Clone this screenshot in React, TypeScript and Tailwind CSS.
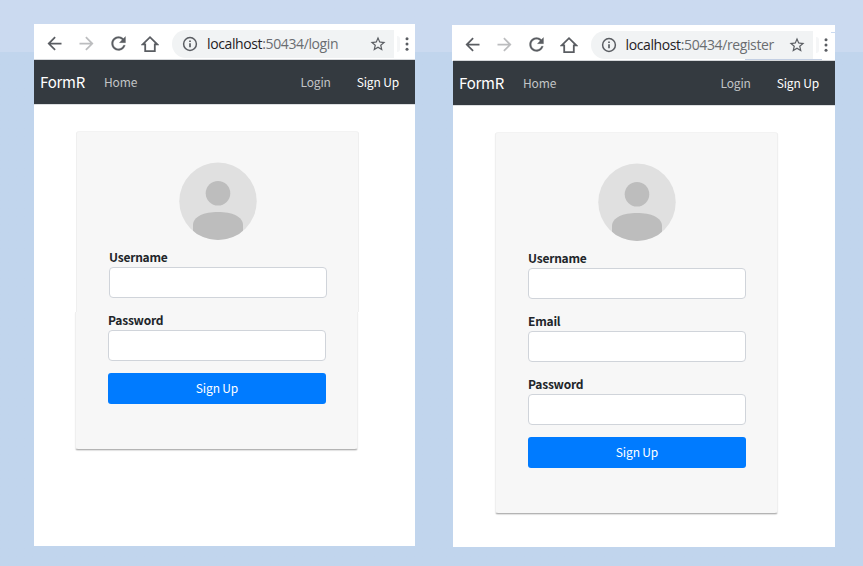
import React from "react";

const sans = "font-['Noto_Sans_CJK_SC','Noto_Sans',sans-serif]";

function ArrowBack({ className = "" }: { className?: string }) {
  return (
    <svg viewBox="0 0 24 24" className={`size-[21px] shrink-0 ${className}`} fill="currentColor">
      <path d="M20 11H7.83l5.59-5.59L12 4l-8 8 8 8 1.41-1.41L7.83 13H20v-2z" />
    </svg>
  );
}

function Reload() {
  return (
    <svg viewBox="0 0 24 24" className="size-[21px] shrink-0" fill="currentColor" stroke="currentColor" strokeWidth="0.3">
      <path d="M17.65 6.35C16.2 4.9 14.21 4 12 4c-4.42 0-7.99 3.58-7.99 8s3.57 8 7.99 8c3.73 0 6.84-2.55 7.73-6h-2.08c-.82 2.33-3.04 4-5.65 4-3.31 0-6-2.69-6-6s2.69-6 6-6c1.66 0 3.14.69 4.22 1.78L13 11h7V4l-2.35 2.35z" />
    </svg>
  );
}

function HomeIcon() {
  return (
    <svg viewBox="0 0 18 18" className="size-[18px] shrink-0" fill="none" stroke="currentColor" strokeWidth="1.8">
      <path d="M1.7 9.4 9 2.2l7.3 7.2h-2.5v6.7H4.2V9.4Z" />
    </svg>
  );
}

function InfoIcon() {
  return (
    <svg viewBox="0 0 16 16" className="size-4 shrink-0" fill="none" stroke="currentColor">
      <circle cx="8" cy="8" r="6.4" strokeWidth="1.5" />
      <path d="M8 7.2v4M8 4.4v1.6" strokeWidth="1.7" />
    </svg>
  );
}

function StarIcon() {
  return (
    <svg viewBox="0 0 24 24" className="size-[18px] shrink-0" fill="currentColor">
      <path d="M22 9.24l-7.19-.62L12 2 9.19 8.63 2 9.24l5.46 4.73L5.82 21 12 17.27 18.18 21l-1.63-7.03L22 9.24zM12 15.4l-3.76 2.27 1-4.28-3.32-2.88 4.38-.38L12 6.1l1.71 4.04 4.38.38-3.32 2.88 1 4.28L12 15.4z" />
    </svg>
  );
}

function Dots() {
  return (
    <svg viewBox="0 0 4 14" className="h-[14px] w-1 shrink-0" fill="currentColor">
      <circle cx="2" cy="1.8" r="1.5" />
      <circle cx="2" cy="7" r="1.5" />
      <circle cx="2" cy="12.2" r="1.5" />
    </svg>
  );
}

function Toolbar({ path }: { path: string }) {
  return (
    <div className="flex h-9 items-center border-b border-[#d5d7da] bg-white pt-[5px] pb-px text-[#5a5d62]">
      <ArrowBack className="ml-[9.5px]" />
      <ArrowBack className="ml-[11px] rotate-180 text-[#bcbdbf]" />
      <div className="ml-[11px] flex">
        <Reload />
      </div>
      <div className="ml-[12.5px] flex">
        <HomeIcon />
      </div>
      <div className="ml-[13px] flex h-7 w-[222px] items-center rounded-l-full rounded-r-lg bg-[#f1f3f4] pl-[10px]">
        <InfoIcon />
        <span className="ml-[9px] w-[162px] font-['Open_Sans',sans-serif] text-[14px] leading-5 tracking-[-0.38px] whitespace-nowrap text-[#6a6d71]">
          <span className="text-[#1f2124]">localhost</span>:50434{path}
        </span>
        <StarIcon />
      </div>
      <div className="ml-[3px] h-4 w-[3px] rounded-r-full bg-[#f5f6f7]" />
      <div className="ml-[5px] flex">
        <Dots />
      </div>
    </div>
  );
}

function Navbar() {
  return (
    <nav className={`flex h-11 items-center bg-[#343a40] pl-[6px] text-[12px] tracking-[-0.15px] text-[#c2c4c6] ${sans}`}>
      <span className="w-[64px] text-[15px] tracking-[-0.3px] text-white">FormR</span>
      <span className="pb-px">Home</span>
      <span className="ml-auto pb-px">Login</span>
      <span className="mr-4 ml-[26px] pb-px text-white">Sign Up</span>
    </nav>
  );
}

function Avatar({ id }: { id: string }) {
  return (
    <svg viewBox="0 0 78 78" className="mx-auto block size-[78px]">
      <clipPath id={id}>
        <circle cx="39" cy="39.3" r="38.7" />
      </clipPath>
      <circle cx="39" cy="39.3" r="38.7" fill="#e0e0e0" />
      <circle cx="39" cy="31.2" r="12.3" fill="#bdbdbd" />
      <path d="M14 78V63C14 54.500 25 50 39 50S64 54.500 64 63V78Z" fill="#bdbdbd" clipPath={`url(#${id})`} />
    </svg>
  );
}

function Field({ label, className = "" }: { label: string; className?: string }) {
  return (
    <label className={`block ${className}`}>
      <span className={`block h-[18px] text-[12px] leading-4 font-bold tracking-[-0.22px] text-[#212529] ${sans}`}>
        {label}
      </span>
      <input className="block h-[31px] w-[218px] rounded-[4px] border border-[#d0d4da] bg-white outline-none" />
    </label>
  );
}

function SubmitButton() {
  return (
    <button
      className={`block h-[31px] w-[218px] rounded-[3px] bg-[#007bff] pb-[2px] text-[12px] leading-[29px] tracking-[-0.15px] text-white ${sans}`}
    >
      Sign Up
    </button>
  );
}

function LoginCard() {
  return (
    <div className="mt-[26px] ml-[41px]">
      <div className="ml-px h-[181px] w-[283px] rounded-t-[3px] border-x border-t border-x-[#efefef] border-t-[#f3f3f3] bg-[#f7f7f7] pt-[30px]">
        <Avatar id="avatar-login" />
        <Field label="Username" className="mt-[9px] ml-8" />
      </div>
      <div className="h-[138px] w-[283px] rounded-b-[3px] border-x border-b border-x-[#efefef] border-b-[#b4b4b4] bg-[#f7f7f7] shadow-[0_1px_1px_rgba(0,0,0,0.12)]">
        <Field label="Password" className="ml-8" />
        <div className="mt-3 ml-8">
          <SubmitButton />
        </div>
      </div>
    </div>
  );
}

function RegisterCard() {
  return (
    <div className="mt-[26px] ml-[42px] h-[382px] w-[283px] rounded-[3px] border border-x-[#efefef] border-t-[#f3f3f3] border-b-[#b4b4b4] bg-[#f7f7f7] pt-[30px] shadow-[0_1px_1px_rgba(0,0,0,0.12)]">
      <Avatar id="avatar-register" />
      <div className="ml-8 flex flex-col">
        <Field label="Username" className="mt-[9px]" />
        <Field label="Email" className="mt-[14px]" />
        <Field label="Password" className="mt-[14px]" />
        <div className="mt-3">
          <SubmitButton />
        </div>
      </div>
    </div>
  );
}

export default function App() {
  return (
    <div className="flex h-[566px] w-[863px] overflow-hidden bg-linear-to-b from-[#cbdaf0] from-[52px] to-[#c1d5ed] to-[52px]">
      <section className="mt-6 ml-[34px] h-[522px] w-[381px] bg-white">
        <Toolbar path="/login" />
        <Navbar />
        <div className="border-t border-[#dddfe1]">
          <LoginCard />
        </div>
      </section>
      <section className="mt-[25px] ml-[38px] h-[522px] w-[382px] bg-white">
        <div className="relative -ml-px bg-white pl-[0.5px]">
          <Toolbar path="/register" />
          <div className="absolute right-[13px] bottom-px h-px w-[77px] bg-[#c3cfe3]" />
          <div className="absolute top-[7px] right-0 h-px w-1 bg-[#cbdaf0]" />
        </div>
        <Navbar />
        <div className="border-t border-[#dddfe1]">
          <RegisterCard />
        </div>
      </section>
    </div>
  );
}
